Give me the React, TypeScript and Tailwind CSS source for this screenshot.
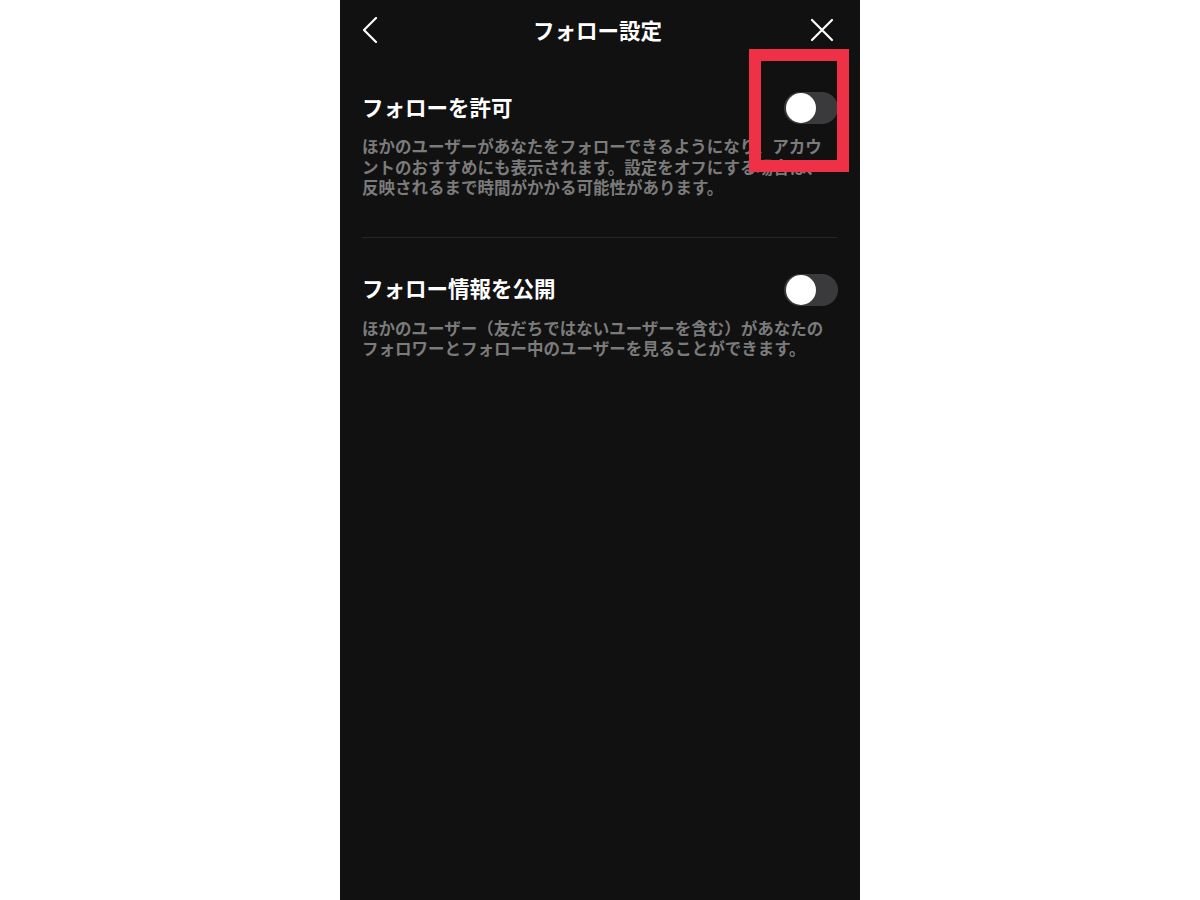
import React from "react";

const Toggle = () => (
  <div className="relative w-[54px] h-[32px] rounded-full bg-[#3a3a3c] shrink-0">
    <div className="absolute left-[2px] top-[1px] w-[30px] h-[30px] rounded-full bg-white" />
  </div>
);

const Section = ({ title, lines }: { title: string; lines: string[] }) => (
  <div className="flex flex-col">
    <div className="flex items-center justify-between h-[32px]">
      <span className="text-[21.5px] font-bold text-white leading-none mb-[3px]">{title}</span>
      <Toggle />
    </div>
    <p className="mt-[12px] text-[16.5px] leading-[20.5px] font-bold text-[#7b7b7b] whitespace-nowrap">
      {lines.map((l, i) => (
        <React.Fragment key={i}>
          {l}
          {i < lines.length - 1 && <br />}
        </React.Fragment>
      ))}
    </p>
  </div>
);

export default function App() {
  return (
    <div
      className="w-full h-[900px] bg-white"
      style={{ fontFamily: '"Noto Sans CJK JP", "Noto Sans", sans-serif' }}
    >
      <div className="relative mx-auto w-[520px] h-[900px] bg-[#111111]">
        {/* header */}
        <div className="flex items-center justify-between h-[60px] px-[22px]">
          <svg width="18" height="26" viewBox="0 0 18 26" className="ml-[-1px]">
            <polyline points="15,1 3,13 15,25" fill="none" stroke="#fff" strokeWidth="2.2" strokeLinecap="round" strokeLinejoin="round" />
          </svg>
          <span className="text-[21.5px] font-bold text-white ml-[6px]">フォロー設定</span>
          <svg width="24" height="24" viewBox="0 0 24 24" className="mr-[4px]">
            <path d="M2 2 L22 22 M22 2 L2 22" stroke="#fff" strokeWidth="2.2" strokeLinecap="round" />
          </svg>
        </div>

        <div className="px-[22px] pt-[32px]">
          <Section
            title="フォローを許可"
            lines={[
              "ほかのユーザーがあなたをフォローできるようになり、アカウ",
              "ントのおすすめにも表示されます。設定をオフにする場合は、",
              "反映されるまで時間がかかる可能性があります。",
            ]}
          />
          <div className="mt-[39px] mb-[36px] h-px bg-[#272727] mr-[1px]" />
          <Section
            title="フォロー情報を公開"
            lines={[
              "ほかのユーザー（友だちではないユーザーを含む）があなたの",
              "フォロワーとフォロー中のユーザーを見ることができます。",
            ]}
          />
        </div>

        {/* highlight */}
        <div className="absolute left-[409px] top-[49px] w-[100px] h-[123px] border-[12px] border-[#ee3147]" />
      </div>
    </div>
  );
}
